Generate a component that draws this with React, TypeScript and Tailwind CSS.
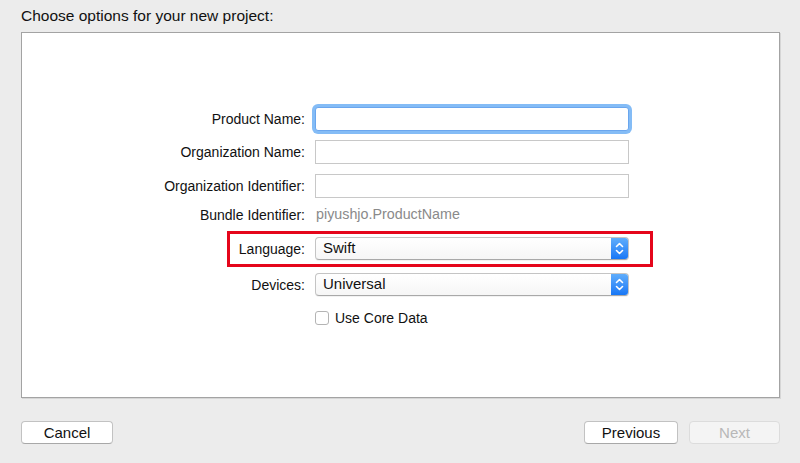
import React from "react";

const font = { fontFamily: '"Liberation Sans", Arial, sans-serif' };

const Label = ({ children }: { children: React.ReactNode }) => (
    <div className="w-[283px] shrink-0 text-right text-[14px] text-[#111] leading-none">{children}</div>
);

const TextField = ({ focused }: { focused?: boolean }) => (
    <div
        className={`ml-[10px] w-[314px] h-[24px] bg-white border ${
            focused
                ? "border-[#6aa6ee] rounded-[3px] shadow-[0_0_0_3px_#84bcf6]"
                : "border-[#c8c8c8]"
        }`}
    />
);

const Chevrons = () => (
    <svg width="9" height="13" viewBox="0 0 9 13" fill="none">
        <path d="M1.5 4.5 L4.5 1.5 L7.5 4.5" stroke="white" strokeWidth="1.6" strokeLinecap="round" strokeLinejoin="round" />
        <path d="M1.5 8.5 L4.5 11.5 L7.5 8.5" stroke="white" strokeWidth="1.6" strokeLinecap="round" strokeLinejoin="round" />
    </svg>
);

const Select = ({ value }: { value: string }) => (
    <div className="ml-[10px] w-[314px] h-[23px] flex rounded-[4px] border border-[#c4c4c4] border-b-[#a9a9a9] bg-gradient-to-b from-white to-[#f6f6f6] shadow-[0_1px_0_rgba(0,0,0,0.05)] overflow-hidden">
        <div className="flex-1 flex items-center pl-[7px] text-[15px] text-[#111]">{value}</div>
        <div className="w-[17px] h-full flex items-center justify-center bg-gradient-to-b from-[#5fadfb] to-[#1677f6]">
            <Chevrons />
        </div>
    </div>
);

const Button = ({ label, disabled, w }: { label: string; disabled?: boolean; w: string }) => (
    <button
        disabled={disabled}
        className={`${w} h-[23px] rounded-[4px] border text-[15px] leading-none ${
            disabled
                ? "border-[#dcdcdc] bg-[#f4f4f4] text-[#b8b8b8]"
                : "border-[#c2c2c2] border-b-[#a8a8a8] bg-white text-[#111]"
        }`}
    >
        {label}
    </button>
);

export default function App() {
    return (
        <div style={font} className="w-[800px] h-[463px] bg-[#ececec] flex flex-col">
            <div className="pl-[21px] pt-[4px] h-[32px] text-[15.5px] text-[#111]">Choose options for your new project:</div>

            <div className="ml-[21px] w-[759px] h-[366px] bg-white border border-[#a3a3a3] shadow-[1px_1px_0_#d6d6d6] flex flex-col pt-[74px]">
                <div className="flex items-center h-[24px]">
                    <Label>Product Name:</Label>
                    <TextField focused />
                </div>
                <div className="flex items-center h-[24px] mt-[9px]">
                    <Label>Organization Name:</Label>
                    <TextField />
                </div>
                <div className="flex items-center h-[24px] mt-[10px]">
                    <Label>Organization Identifier:</Label>
                    <TextField />
                </div>
                <div className="flex items-center h-[20px] mt-[7px]">
                    <Label>Bundle Identifier:</Label>
                    <div className="ml-[11px] text-[14.3px] text-[#8a8a8a]">piyushjo.ProductName</div>
                </div>
                <div className="relative flex items-center h-[23px] mt-[12px]">
                    <Label>Language:</Label>
                    <Select value="Swift" />
                    <div className="absolute left-[205px] top-[-6px] w-[426px] h-[36px] border-[3px] border-[#e5061b] pointer-events-none" />
                </div>
                <div className="flex items-center h-[23px] mt-[13px]">
                    <Label>Devices:</Label>
                    <Select value="Universal" />
                </div>
                <div className="flex items-center h-[16px] mt-[14px]">
                    <div className="w-[283px] shrink-0" />
                    <div className="ml-[10px] w-[14px] h-[14px] rounded-[3px] border border-[#b4b4b4] bg-white" />
                    <div className="ml-[6px] text-[14px] text-[#111]">Use Core Data</div>
                </div>
            </div>

            <div className="flex items-center mt-[23px] pl-[21px] pr-[20px]">
                <Button label="Cancel" w="w-[92px]" />
                <div className="flex-1" />
                <Button label="Previous" w="w-[94px]" />
                <div className="w-[11px]" />
                <Button label="Next" w="w-[91px]" disabled />
            </div>
        </div>
    );
}
